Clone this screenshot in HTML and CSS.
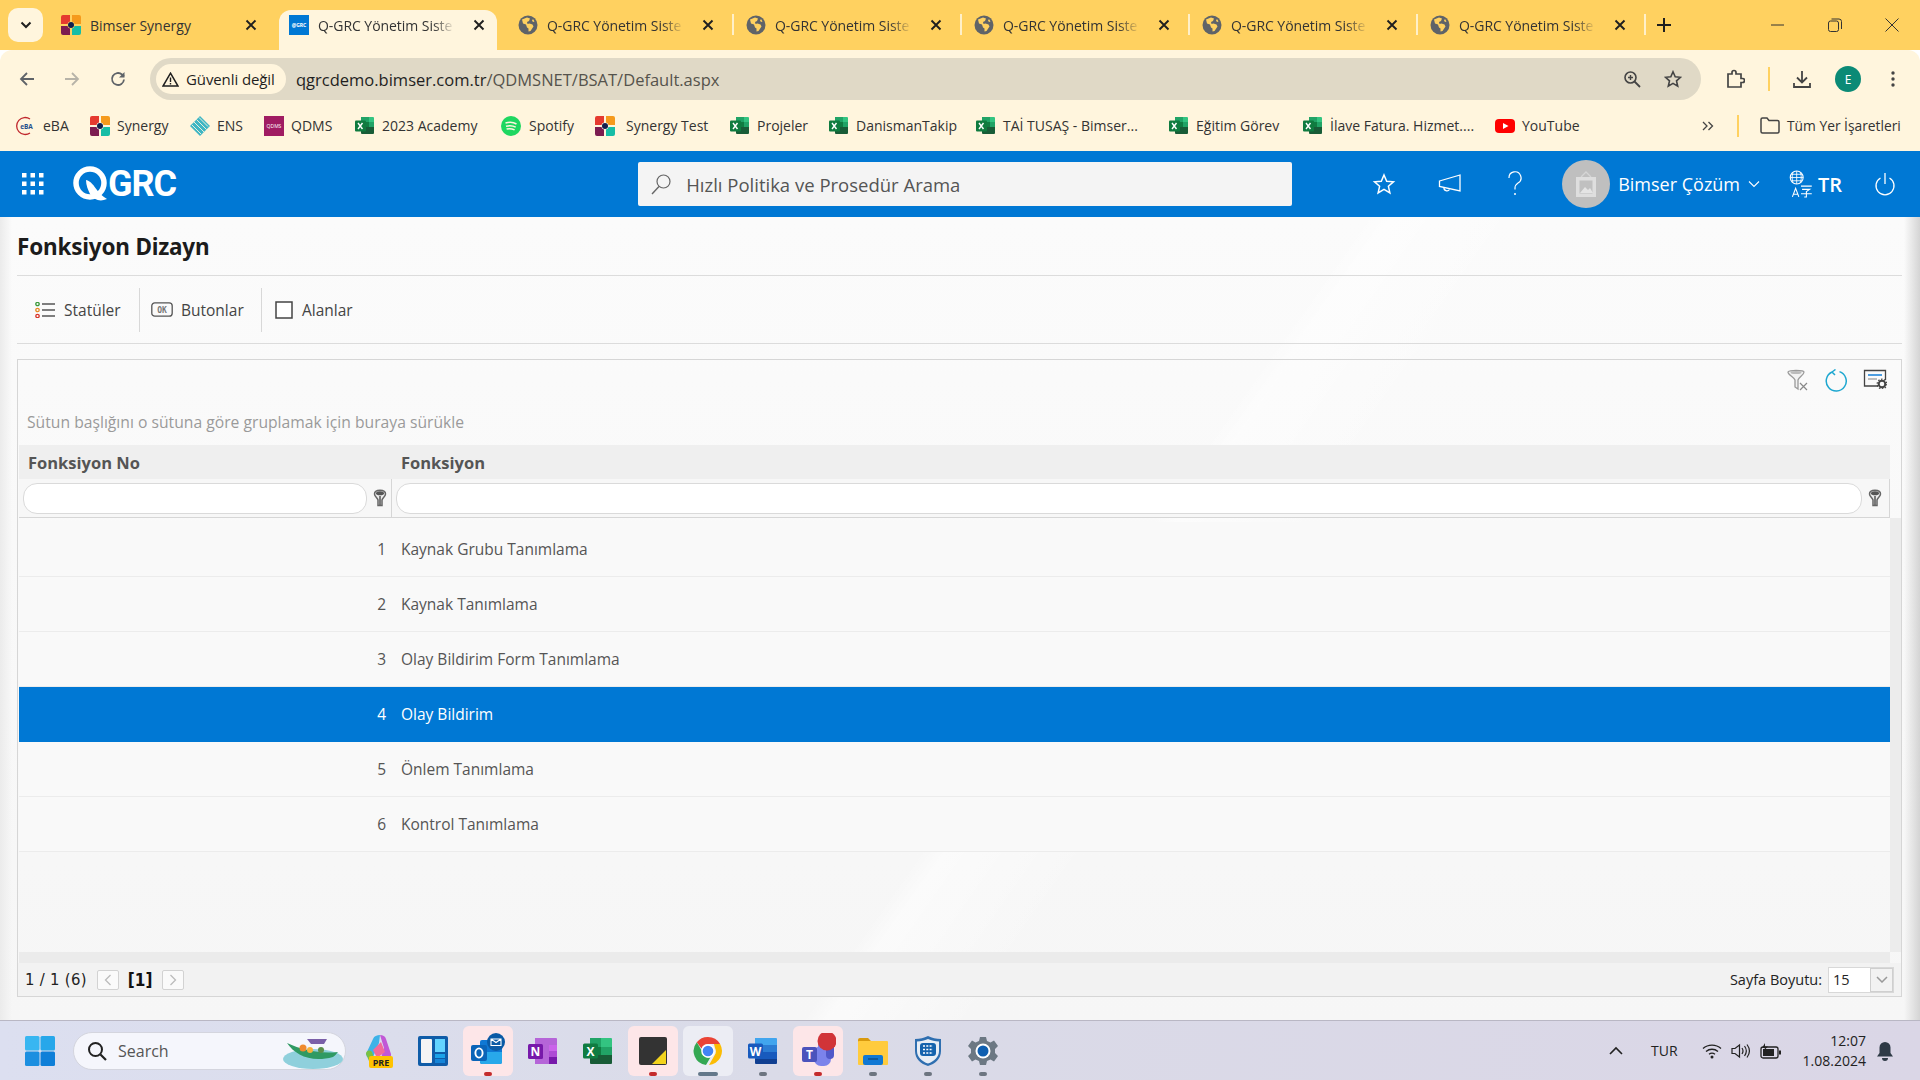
FILE: index.html
```html
<!DOCTYPE html>
<html lang="tr">
<head>
<meta charset="utf-8">
<title>Q-GRC Yönetim Sistemi</title>
<link rel="stylesheet" href="styles.css">
</head>
<body>
<svg class="defs" width="0" height="0" aria-hidden="true">
  <symbol id="bimser" viewBox="0 0 20 20">
    <path fill="#e53a2f" d="M2 0h7v6.500A3 3 0 0 0 6.500 9H0V2a2 2 0 0 1 2-2z"/>
    <path fill="#f59a1c" d="M11 0h7a2 2 0 0 1 2 2v7h-6.500A3 3 0 0 0 11 6.500z"/>
    <path fill="#7c1c50" d="M0 11h6.500A3 3 0 0 0 9 13.500V20H2a2 2 0 0 1-2-2z"/>
    <path fill="#17bda5" d="M13.500 11H20v7a2 2 0 0 1-2 2h-7v-6.500A3 3 0 0 0 13.500 11z"/>
    <circle cx="10" cy="10" r="3" fill="#14204f"/>
  </symbol>
  <symbol id="globe" viewBox="0 0 20 20">
    <circle cx="10" cy="10" r="9.500" fill="#5f6368"/>
    <path fill="#ffd160" d="M9 2.500 4 4.500l1 4 3 1 1 3 1.500 1v3l2-.5 3-4.500-1-2-3-1-2 .5-.5-2 2-1 1-2.500zM15 4l1.500 2.500-1.500.5-1-1.500z"/>
  </symbol>
  <symbol id="tabclose" viewBox="0 0 12 12">
    <path d="M1.500 1.500l9 9M10.500 1.500l-9 9" stroke="#1f1f1f" stroke-width="1.900" fill="none"/>
  </symbol>
  <symbol id="xlsx" viewBox="0 0 20 20">
    <path fill="#21a366" d="M6 1h8v5H6z"/><path fill="#33c481" d="M14 1h4a1 1 0 0 1 1 1v4h-5z"/>
    <path fill="#107c41" d="M6 6h8v5H6z"/><path fill="#21a366" d="M14 6h5v5h-5z"/>
    <path fill="#185c37" d="M6 11h13v6a1 1 0 0 1-1 1H7a1 1 0 0 1-1-1z"/>
    <rect x="0" y="4.500" width="11" height="11" rx="1" fill="#0f7b3f"/>
    <path d="M3 7l4.500 6M7.500 7L3 13" stroke="#fff" stroke-width="1.400" fill="none"/>
  </symbol>
  <symbol id="funnel" viewBox="0 0 14 18">
    <path d="M1.500 5c0-5 11-5 11 0 0 2.500-3 3.500-3.500 6v5.500H5V11C4.500 8.500 1.500 7.500 1.500 5z" fill="#eee" stroke="#666" stroke-width="1.500"/>
    <ellipse cx="7" cy="4.200" rx="4" ry="2" fill="#555"/>
    <path d="M7 7v9" stroke="#555" stroke-width="1.500"/>
  </symbol>
</svg>

<div class="tabstrip">
  <button class="tabs-menu" type="button"><svg width="12" height="8" viewBox="0 0 12 8"><path d="M1.500 1.500 6 6l4.500-4.500" fill="none" stroke="#1f1f1f" stroke-width="2"/></svg></button>
  <div class="tab"><svg class="fav"><use href="#bimser"/></svg><span class="tab-title tab-title-full">Bimser Synergy</span><svg class="tab-x"><use href="#tabclose"/></svg></div>
  <div class="tab tab-active"><span class="fav fav-qgrc">@GRC</span><span class="tab-title">Q-GRC Yönetim Siste</span><svg class="tab-x"><use href="#tabclose"/></svg></div>
  <div class="tab tab-nosep"><svg class="fav"><use href="#globe"/></svg><span class="tab-title">Q-GRC Yönetim Siste</span><svg class="tab-x"><use href="#tabclose"/></svg></div>
  <div class="tab"><svg class="fav"><use href="#globe"/></svg><span class="tab-title">Q-GRC Yönetim Siste</span><svg class="tab-x"><use href="#tabclose"/></svg></div>
  <div class="tab"><svg class="fav"><use href="#globe"/></svg><span class="tab-title">Q-GRC Yönetim Siste</span><svg class="tab-x"><use href="#tabclose"/></svg></div>
  <div class="tab"><svg class="fav"><use href="#globe"/></svg><span class="tab-title">Q-GRC Yönetim Siste</span><svg class="tab-x"><use href="#tabclose"/></svg></div>
  <div class="tab tab-last"><svg class="fav"><use href="#globe"/></svg><span class="tab-title">Q-GRC Yönetim Siste</span><svg class="tab-x"><use href="#tabclose"/></svg></div>
  <svg class="newtab" width="14" height="14" viewBox="0 0 14 14"><path d="M7 0v14M0 7h14" stroke="#1f1f1f" stroke-width="2"/></svg>
  <div class="winctl">
    <svg width="14" height="14" viewBox="0 0 14 14"><path d="M0 7h13" stroke="#333" stroke-width="1"/></svg>
    <svg width="14" height="14" viewBox="0 0 14 14"><rect x=".5" y="3" width="10" height="10.500" rx="2" fill="none" stroke="#333"/><path d="M3.500 1H11a2.500 2.500 0 0 1 2.500 2.500V11" fill="none" stroke="#333"/></svg>
    <svg width="14" height="14" viewBox="0 0 14 14"><path d="M.5.500l13 13M13.500.500l-13 13" stroke="#333" stroke-width="1"/></svg>
  </div>
</div>

<div class="toolbar">
  <svg class="nav nav-back" width="16" height="16" viewBox="0 0 16 16"><path d="M15 8H2M8 2 2 8l6 6" fill="none" stroke="#5f6368" stroke-width="1.800"/></svg>
  <svg class="nav nav-fwd" width="16" height="16" viewBox="0 0 16 16"><path d="M1 8h13M8 2l6 6-6 6" fill="none" stroke="#b7b3a8" stroke-width="1.800"/></svg>
  <svg class="nav nav-reload" width="16" height="16" viewBox="0 0 16 16"><path d="M14 8.500A6 6 0 1 1 12 3.500L14 5.500" fill="none" stroke="#5f6368" stroke-width="1.800"/><path d="M14.500 1v5.500H9z" fill="#5f6368"/></svg>
  <div class="omnibox">
    <div class="chip">
      <svg width="17" height="15" viewBox="0 0 17 15"><path d="M8.500 1.200 16 14H1z" fill="none" stroke="#1f1f1f" stroke-width="1.500"/><path d="M8.500 5.500v4.500M8.500 11v1.500" stroke="#1f1f1f" stroke-width="1.400"/></svg>
      <span>Güvenli değil</span>
    </div>
    <div class="url">qgrcdemo.bimser.com.tr<span class="url-path">/QDMSNET/BSAT/Default.aspx</span></div>
    <svg class="omni-zoom" width="18" height="18" viewBox="0 0 18 18"><circle cx="7.500" cy="7.500" r="5.500" fill="none" stroke="#444" stroke-width="1.600"/><path d="M11.500 11.500 17 17" stroke="#444" stroke-width="1.800"/><path d="M5 7.500h5M7.500 5v5" stroke="#444" stroke-width="1.400"/></svg>
    <svg class="omni-star" width="18" height="18" viewBox="0 0 18 18"><path d="M9 1.800 11.200 6.800l5.300.5-4 3.600 1.200 5.300L9 13.400l-4.700 2.800 1.200-5.300-4-3.600 5.300-.5z" fill="none" stroke="#444" stroke-width="1.600"/></svg>
  </div>
  <svg class="ext" width="20" height="20" viewBox="0 0 20 20"><path d="M3 5h4V3.500a2 2 0 0 1 4 0V5h5v4.500h1.500a2 2 0 0 1 0 4H16V18H3v-4.500h0V10h0z" fill="none" stroke="#444" stroke-width="1.700"/></svg>
  <i class="tb-sep"></i>
  <svg class="dl" width="20" height="20" viewBox="0 0 20 20"><path d="M10 2v11M5 8.500l5 5 5-5" fill="none" stroke="#444" stroke-width="1.800"/><path d="M2 14v4h16v-4" fill="none" stroke="#444" stroke-width="1.800"/></svg>
  <span class="avatar-e">E</span>
  <svg class="kebab" width="4" height="18" viewBox="0 0 4 18"><circle cx="2" cy="3" r="1.700" fill="#444"/><circle cx="2" cy="9" r="1.700" fill="#444"/><circle cx="2" cy="15" r="1.700" fill="#444"/></svg>
</div>

<div class="bookmarks">
  <a class="bm bm-eba"><svg class="bm-ic" viewBox="0 0 20 20"><path d="M15 3A8.500 8.500 0 1 0 15 17" fill="none" stroke="#c0272d" stroke-width="1.300"/><text x="11.500" y="12.500" text-anchor="middle" class="ebatext">eBA</text></svg><span>eBA</span></a>
  <a class="bm bm-syn"><svg class="bm-ic"><use href="#bimser"/></svg><span>Synergy</span></a>
  <a class="bm bm-ens"><svg class="bm-ic" viewBox="0 0 20 20"><path d="M10 0 20 10 10 20 0 10z" fill="#3fb6c4"/><path d="M4 6l10 10M6.500 3.500l10 10M2 9l9 9M9 1.500l9 9" stroke="#fff5dd" stroke-width=".9"/></svg><span>ENS</span></a>
  <a class="bm bm-qdms"><span class="bm-q">QDMS</span><span>QDMS</span></a>
  <a class="bm bm-aca"><svg class="bm-ic"><use href="#xlsx"/></svg><span>2023 Academy</span></a>
  <a class="bm bm-spo"><svg class="bm-ic" viewBox="0 0 20 20"><circle cx="10" cy="10" r="10" fill="#1ed760"/><path d="M4.500 7c3.500-1 8-.8 11 1M5 10.200c3-.8 7-.6 9.700 1M5.600 13c2.500-.6 5.500-.4 8 .9" stroke="#fff5dd" stroke-width="1.500" fill="none"/></svg><span>Spotify</span></a>
  <a class="bm bm-st"><svg class="bm-ic"><use href="#bimser"/></svg><span>Synergy Test</span></a>
  <a class="bm bm-pro"><svg class="bm-ic"><use href="#xlsx"/></svg><span>Projeler</span></a>
  <a class="bm bm-dan"><svg class="bm-ic"><use href="#xlsx"/></svg><span>DanismanTakip</span></a>
  <a class="bm bm-tai"><svg class="bm-ic"><use href="#xlsx"/></svg><span>TAİ TUSAŞ - Bimser...</span></a>
  <a class="bm bm-egi"><svg class="bm-ic"><use href="#xlsx"/></svg><span>Eğitim Görev</span></a>
  <a class="bm bm-ila"><svg class="bm-ic"><use href="#xlsx"/></svg><span>İlave Fatura. Hizmet....</span></a>
  <a class="bm bm-yt"><svg class="bm-ic" viewBox="0 0 20 20"><rect y="3" width="20" height="14" rx="4" fill="#f00"/><path d="M8 7l5.500 3L8 13z" fill="#fff"/></svg><span>YouTube</span></a>
  <div class="bm-end">
    <svg width="12" height="10" viewBox="0 0 12 10"><path d="M1 1l4 4-4 4M6.500 1l4 4-4 4" fill="none" stroke="#444" stroke-width="1.300"/></svg>
    <i class="tb-sep"></i>
    <svg width="20" height="17" viewBox="0 0 20 17"><path d="M1 2.500A1.500 1.500 0 0 1 2.500 1H7l2 2.500h8.500A1.500 1.500 0 0 1 19 5v9.500a1.500 1.500 0 0 1-1.500 1.500h-15A1.500 1.500 0 0 1 1 14.500z" fill="none" stroke="#444" stroke-width="1.500"/></svg>
    <span>Tüm Yer İşaretleri</span>
  </div>
</div>

<header class="appbar">
  <svg class="waffle" width="22" height="22" viewBox="0 0 22 22" fill="#fff"><rect x="0" y="0" width="4.500" height="4.500"/><rect x="8.500" y="0" width="4.500" height="4.500"/><rect x="17" y="0" width="4.500" height="4.500"/><rect x="0" y="8.500" width="4.500" height="4.500"/><rect x="8.500" y="8.500" width="4.500" height="4.500"/><rect x="17" y="8.500" width="4.500" height="4.500"/><rect x="0" y="17" width="4.500" height="4.500"/><rect x="8.500" y="17" width="4.500" height="4.500"/><rect x="17" y="17" width="4.500" height="4.500"/></svg>
  <div class="logo">
    <svg width="36" height="36" viewBox="0 0 36 36"><circle cx="17" cy="17" r="14" fill="none" stroke="#fff" stroke-width="5.500"/><path d="M13 14c5 1 8 6 11 10 2 3 5 6 10 9-7 3-13 1-17-5-2-4-4-9-4-14z" fill="#fff"/></svg>
    <span>GRC</span>
  </div>
  <div class="search">
    <svg width="22" height="22" viewBox="0 0 22 22"><circle cx="13.500" cy="8.500" r="6.500" fill="none" stroke="#666" stroke-width="1.200"/><path d="M9 13.500 2 21" stroke="#666" stroke-width="1.400"/></svg>
    <span>Hızlı Politika ve Prosedür Arama</span>
  </div>
  <svg class="ab-star" width="24" height="24" viewBox="0 0 24 24"><path d="M12 3l2.700 6.200 6.800.6-5.100 4.500 1.500 6.600L12 17.400 6.100 20.900l1.500-6.600-5.100-4.500 6.800-.6z" fill="none" stroke="#fff" stroke-width="1.500"/></svg>
  <svg class="ab-mega" width="24" height="24" viewBox="0 0 24 24"><path d="M1.500 9 22 3v16L1.500 14.500z" fill="none" stroke="#fff" stroke-width="1.300"/><path d="M6 15.500a3 3 0 0 0 5.500 2" fill="none" stroke="#fff" stroke-width="1.300"/></svg>
  <svg class="ab-help" width="18" height="26" viewBox="0 0 18 26"><path d="M3 7a6 6 0 1 1 9 5c-2 1.300-3 2.500-3 5v1.500" fill="none" stroke="#fff" stroke-width="1.200"/><circle cx="9" cy="23" r="1" fill="#fff"/></svg>
  <div class="user-photo"><svg width="26" height="30" viewBox="0 0 26 30"><path d="M8 8l5-5 5 5" fill="none" stroke="#d5d5d5" stroke-width="1.300"/><rect x="3" y="8" width="20" height="20" fill="#dedede"/><rect x="6.500" y="11.500" width="13" height="13" fill="#c0c0c0"/><path d="M7 24l5-6 3 3 2-2 3 5z" fill="#e4e4e4"/></svg></div>
  <span class="user-name">Bimser Çözüm</span>
  <svg class="user-caret" width="12" height="8" viewBox="0 0 12 8"><path d="M1 1.500l5 5 5-5" fill="none" stroke="#fff" stroke-width="1.100"/></svg>
  <svg class="ab-lang" width="24" height="28" viewBox="0 0 22 26"><circle cx="7" cy="7" r="6" fill="none" stroke="#fff"/><path d="M1 7h12M7 1v12M3.500 2.500c-1 3-1 6 0 9M10.500 2.500c1 3 1 6 0 9M2 4h10M2 10h10" fill="none" stroke="#fff" stroke-width=".8"/><path d="M3 25l3-8 3 8M4 22.500h4" fill="none" stroke="#fff"/><path d="M11 15h10M12 18h7l-3 2v5h-2M11 22h10" fill="none" stroke="#fff"/></svg>
  <span class="lang">TR</span>
  <svg class="ab-power" width="22" height="26" viewBox="0 0 22 26"><path d="M11 2v11" stroke="#fff" stroke-width="1.300"/><path d="M6.500 7A9 9 0 1 0 15.500 7" fill="none" stroke="#fff" stroke-width="1.300"/></svg>
</header>

<main class="page">
  <h1 class="page-title">Fonksiyon Dizayn</h1>
  <nav class="subnav">
    <a class="subnav-item sn-1">
      <svg width="20" height="16" viewBox="0 0 20 16"><circle cx="2.500" cy="2" r="1.700" fill="none" stroke="#3c9a3c" stroke-width="1.300"/><circle cx="2.500" cy="8" r="1.700" fill="none" stroke="#e78a26" stroke-width="1.300"/><circle cx="2.500" cy="14" r="1.700" fill="none" stroke="#d9362b" stroke-width="1.300"/><path d="M7 2h13M7 8h13M7 14h13" stroke="#555" stroke-width="1.300"/></svg>
      <span>Statüler</span>
    </a>
    <a class="subnav-item sn-2">
      <svg width="22" height="15" viewBox="0 0 22 15"><rect x=".8" y=".8" width="20.400" height="13.400" rx="3" fill="none" stroke="#555" stroke-width="1.300"/><text x="11" y="10.500" text-anchor="middle" class="oktext">OK</text></svg>
      <span>Butonlar</span>
    </a>
    <a class="subnav-item sn-3">
      <svg width="18" height="18" viewBox="0 0 18 18"><rect x="1" y="1" width="16" height="16" fill="#fff" stroke="#444" stroke-width="1.500"/></svg>
      <span>Alanlar</span>
    </a>
  </nav>
  <section class="grid-panel">
    <div class="grid-tools">
      <svg width="22" height="22" viewBox="0 0 22 22"><path d="M1 3c0-2 16-2 16 0 0 3-5 5-6 8v9l-3-2v-7C7 8 1 6 1 3z" fill="#f2f2f2" stroke="#9a9a9a" stroke-width="1.300"/><ellipse cx="9" cy="3.500" rx="5.500" ry="1.500" fill="#bbb"/><path d="M13 14l7 7M20 14l-7 7" stroke="#888" stroke-width="1.200"/></svg>
      <svg width="24" height="24" viewBox="0 0 24 24"><path d="M15.500 2.600A10 10 0 1 1 8 3" fill="none" stroke="#1ea7d0" stroke-width="1.500"/><path d="M8 3l3.500-2.500M8 3l3 3" fill="none" stroke="#1ea7d0" stroke-width="1.500"/></svg>
      <svg width="24" height="20" viewBox="0 0 24 20"><path d="M15 17H1.500V1.500h21V11" fill="none" stroke="#444" stroke-width="1.300"/><path d="M5 6h14" stroke="#4d9de0" stroke-width="2"/><path d="M5 10h9" stroke="#aaa" stroke-width="1.500"/><circle cx="19" cy="15" r="3.300" fill="none" stroke="#444" stroke-width="2"/><circle cx="19" cy="15" r="4.800" fill="none" stroke="#444" stroke-width="1.200" stroke-dasharray="1.500 1.500"/></svg>
    </div>
    <div class="group-hint">Sütun başlığını o sütuna göre gruplamak için buraya sürükle</div>
    <div class="grid-head">
      <div class="col-a">Fonksiyon No</div>
      <div class="col-b">Fonksiyon</div>
    </div>
    <div class="grid-filter">
      <div class="filter-cell fc-a"><span class="filter-input"></span><svg class="funnel"><use href="#funnel"/></svg></div>
      <div class="filter-cell fc-b"><span class="filter-input"></span><svg class="funnel"><use href="#funnel"/></svg></div>
    </div>
    <div class="grid-scrollwrap">
      <div class="grid-body">
        <div class="grid-row"><div class="num">1</div><div class="name">Kaynak Grubu Tanımlama</div></div>
        <div class="grid-row"><div class="num">2</div><div class="name">Kaynak Tanımlama</div></div>
        <div class="grid-row"><div class="num">3</div><div class="name">Olay Bildirim Form Tanımlama</div></div>
        <div class="grid-row is-selected"><div class="num">4</div><div class="name">Olay Bildirim</div></div>
        <div class="grid-row"><div class="num">5</div><div class="name">Önlem Tanımlama</div></div>
        <div class="grid-row"><div class="num">6</div><div class="name">Kontrol Tanımlama</div></div>
      </div>
      <div class="vscroll"></div>
    </div>
    <div class="hscroll"></div>
    <div class="pager">
      <span class="pg-count">1 / 1 (6)</span>
      <span class="pg-btn"><svg width="8" height="12" viewBox="0 0 8 12"><path d="M6.500 1 1.500 6l5 5" fill="none" stroke="#bbb" stroke-width="1.300"/></svg></span>
      <b class="pg-cur">[1]</b>
      <span class="pg-btn"><svg width="8" height="12" viewBox="0 0 8 12"><path d="M1.500 1l5 5-5 5" fill="none" stroke="#bbb" stroke-width="1.300"/></svg></span>
      <span class="pg-size-label">Sayfa Boyutu:</span>
      <span class="pg-size"><span class="pg-size-val">15</span><span class="pg-size-btn"><svg width="12" height="7" viewBox="0 0 12 7"><path d="M1 1l5 5 5-5" fill="none" stroke="#999" stroke-width="1.500"/></svg></span></span>
    </div>
  </section>
</main>

<footer class="taskbar">
  <svg class="start" width="32" height="32" viewBox="0 0 32 32"><rect x="1" y="1" width="14.500" height="14.500" rx="1.500" fill="#38b6f1"/><rect x="16.500" y="1" width="14.500" height="14.500" rx="1.500" fill="#27a7ea"/><rect x="1" y="16.500" width="14.500" height="14.500" rx="1.500" fill="#1c8fe0"/><rect x="16.500" y="16.500" width="14.500" height="14.500" rx="1.500" fill="#0f7fd8"/></svg>
  <div class="tb-search">
    <svg width="20" height="20" viewBox="0 0 20 20"><circle cx="8.500" cy="8.500" r="6.500" fill="none" stroke="#222" stroke-width="2"/><path d="M13.500 13.500 19 19" stroke="#222" stroke-width="2.200"/></svg>
    <span>Search</span>
    <svg class="boat" width="64" height="34" viewBox="0 0 64 34"><ellipse cx="34" cy="24" rx="30" ry="10" fill="#8fd0dc"/><path d="M8 8c8 12 24 20 46 14 2-1 3-3 5-5-18 2-36-2-51-9z" fill="#2f9a63"/><circle cx="24" cy="13" r="3.500" fill="#ef8a2e"/><circle cx="31" cy="15" r="3" fill="#f4b33c"/><circle cx="42" cy="15" r="3" fill="#5b8f4a"/><path d="M28 4h20l-3 5H32z" fill="#7a5fa8"/></svg>
  </div>
  <div class="tb-apps">
    <div class="tb-app"><svg width="30" height="34" viewBox="0 0 30 34"><path d="M3 20 10 5c1-3 4-4 7-4l-1 8-6 14H4z" fill="#3db2e8"/><path d="M17 1c3 0 5 1 6 4l5 15c.5 2-1 4-3 4h-7l3-10z" fill="#c158d6"/><path d="M10 16l8-8 4 10-8 6z" fill="#f26a9b"/><path d="M3 20c0-3 3-5 6-2l3 9H6z" fill="#7ac143"/><rect x="6" y="22" width="24" height="12" rx="2" fill="#ffc300"/><text x="18" y="31.500" text-anchor="middle" class="pretext">PRE</text></svg></div>
    <div class="tb-app"><svg width="30" height="30" viewBox="0 0 30 30"><rect width="30" height="30" rx="2" fill="#0f5ca8"/><rect x="3" y="3" width="11" height="24" rx="1" fill="#f4f4f4"/><rect x="17" y="3" width="10" height="13" fill="#63d4ff"/><rect x="17" y="18" width="10" height="4" fill="#1ba2e8"/><rect x="17" y="23" width="10" height="4" fill="#1585d8"/></svg></div>
    <div class="tb-app is-open is-hot"><svg width="36" height="36" viewBox="0 0 36 36"><rect x="10" y="7" width="22" height="24" rx="2" fill="#0f78d4"/><path d="M10 19l22 0v10a2 2 0 0 1-2 2H12a2 2 0 0 1-2-2z" fill="#28a8ea"/><rect x="1" y="12" width="16" height="16" rx="2" fill="#0a64b8"/><ellipse cx="9" cy="20" rx="3.600" ry="4.600" fill="none" stroke="#fff" stroke-width="1.900"/><circle cx="26" cy="9" r="9" fill="#0a5aa5"/><path d="M21 6h10v6.500H21zM21 6l5 3.500L31 6" fill="none" stroke="#fff" stroke-width="1.100"/></svg></div>
    <div class="tb-app"><svg width="30" height="30" viewBox="0 0 30 30"><path d="M7 2h21a1 1 0 0 1 1 1v24a1 1 0 0 1-1 1H7z" fill="#b565d8"/><path d="M21 9h8v6h-8z" fill="#ca64ea"/><path d="M21 15h8v6h-8z" fill="#ae4bd5"/><path d="M21 21h8v7h-8z" fill="#7719aa"/><rect x="0" y="8" width="15" height="15" rx="1.500" fill="#7719aa"/><text x="7.500" y="20" text-anchor="middle" class="apptext">N</text></svg></div>
    <div class="tb-app"><svg width="30" height="30" viewBox="0 0 30 30"><path d="M7 2h11v9H7z" fill="#21a366"/><path d="M18 2h10a1 1 0 0 1 1 1v8H18z" fill="#33c481"/><path d="M7 11h11v8H7z" fill="#107c41"/><path d="M18 11h11v8H18z" fill="#21a366"/><path d="M7 19h22v8a1 1 0 0 1-1 1H8a1 1 0 0 1-1-1z" fill="#185c37"/><rect x="0" y="7.500" width="15" height="15" rx="1.500" fill="#107c41"/><text x="7.500" y="19.500" text-anchor="middle" class="apptext">X</text></svg></div>
    <div class="tb-app is-open is-hot"><svg width="28" height="28" viewBox="0 0 28 28"><rect width="28" height="28" rx="2" fill="#333"/><path d="M13 27 27 13v14z" fill="#f3d31c"/></svg></div>
    <div class="tb-app is-open is-active"><svg width="30" height="30" viewBox="0 0 30 30"><path d="M15 1a14 14 0 0 1 12.100 7H15a7 7 0 0 0-6.500 4.400L3.800 6.200A14 14 0 0 1 15 1z" fill="#ea4335"/><path d="M27.100 8A14 14 0 0 1 16 29l5.600-9.700A7 7 0 0 0 22 12l-1-4z" fill="#fbbc04"/><path d="M3.800 6.200 9 15a7 7 0 0 0 8.400 6.600L13 29A14 14 0 0 1 3.800 6.200z" fill="#34a853"/><circle cx="15" cy="15" r="6.800" fill="#fff"/><circle cx="15" cy="15" r="5.300" fill="#4285f4"/></svg></div>
    <div class="tb-app is-open"><svg width="30" height="30" viewBox="0 0 30 30"><path d="M7 2h21a1 1 0 0 1 1 1v6H7z" fill="#41a5ee"/><rect x="7" y="9" width="22" height="7" fill="#2b7cd3"/><rect x="7" y="16" width="22" height="7" fill="#185abd"/><path d="M7 23h22v4a1 1 0 0 1-1 1H8a1 1 0 0 1-1-1z" fill="#103f91"/><rect x="0" y="7.500" width="15" height="15" rx="1.500" fill="#185abd"/><text x="7.500" y="19.500" text-anchor="middle" class="apptext">W</text></svg></div>
    <div class="tb-app is-open is-hot"><svg width="36" height="36" viewBox="0 0 36 36"><circle cx="22" cy="13" r="4" fill="#7b83eb"/><rect x="14" y="13" width="17" height="20" rx="7" fill="#7b83eb"/><rect x="26" y="10" width="8" height="16" rx="4" fill="#5059c9"/><rect x="2" y="14" width="15" height="15" rx="2" fill="#4b53bc"/><text x="9.500" y="26" text-anchor="middle" class="apptext">T</text><circle cx="27" cy="8" r="9.500" fill="#d13438"/></svg></div>
    <div class="tb-app is-open"><svg width="32" height="28" viewBox="0 0 32 28"><path d="M1 3a2 2 0 0 1 2-2h8l3 3h16v6H1z" fill="#d99a0e"/><rect x="1" y="4" width="30" height="24" rx="1" fill="#ffcb3d"/><rect x="6" y="18" width="20" height="10" rx="2" fill="#0f78d4"/><path d="M11 22h10" stroke="#0a4f8f" stroke-width="1.500"/></svg></div>
    <div class="tb-app is-open"><svg width="28" height="32" viewBox="0 0 28 32"><path d="M14 1c4 2 8 3 13 3v12c0 8-6 13-13 15C7 29 1 24 1 16V4c5 0 9-1 13-3z" fill="#2f6fb0"/><path d="M14 4c3.500 1.500 7 2.500 11 2.500V16c0 6-5 10.500-11 12.500C8 26.500 3 22 3 16V6.500C7 6.500 10.500 5.500 14 4z" fill="#e8eef5"/><rect x="6" y="8" width="16" height="13" rx="3" fill="#1463ad"/><path d="M9 11h10M9 14.500h10M9 18h10" stroke="#fff" stroke-width="1.500" stroke-dasharray="2 1.300"/></svg></div>
    <div class="tb-app is-open"><svg width="30" height="30" viewBox="0 0 30 30"><path d="M12 1h6l1 4 3.500 1.500L26 4.500l4 5.500-3 3v4l3 3-4 5.500-3.500-2L19 25l-1 4h-6l-1-4-3.500-1.500L4 25.500 0 20l3-3v-4L0 10l4-5.500 3.500 2L11 5z" fill="#6c7883"/><circle cx="15" cy="15" r="7.500" fill="#fff"/><circle cx="15" cy="15" r="5.500" fill="#0f5fb0"/></svg></div>
  </div>
  <div class="tray">
    <svg class="tr-up" width="14" height="9" viewBox="0 0 14 9"><path d="M1 8l6-6 6 6" fill="none" stroke="#222" stroke-width="1.600"/></svg>
    <span class="tr-lang">TUR</span>
    <svg class="tr-wifi" width="20" height="16" viewBox="0 0 20 16"><path d="M1 5.500c5-4.500 13-4.500 18 0M4 8.500c3.500-3 8.500-3 12 0M7 11.300c2-1.500 4-1.500 6 0" fill="none" stroke="#222" stroke-width="1.300"/><circle cx="10" cy="14" r="1.500" fill="#222"/></svg>
    <svg class="tr-vol" width="20" height="16" viewBox="0 0 20 16"><path d="M1 5.500h3L8.500 2v12L4 10.500H1z" fill="none" stroke="#222" stroke-width="1.200"/><path d="M11 5c1.200 1.800 1.200 4.200 0 6M13.500 3c2.200 3 2.200 7 0 10M16 1.500c3 4 3 9 0 13" fill="none" stroke="#222" stroke-width="1.200"/></svg>
    <svg class="tr-bat" width="22" height="16" viewBox="0 0 22 16"><rect x="1" y="4" width="17" height="11" rx="2" fill="none" stroke="#222" stroke-width="1.300"/><rect x="3" y="6" width="11" height="7" fill="#222"/><rect x="19" y="7.500" width="2" height="4" fill="#222"/><path d="M5 0 2 5h3L3.500 8 8 3.500H5z" fill="#222"/></svg>
    <div class="clock"><span>12:07</span><span>1.08.2024</span></div>
    <svg class="tr-bell" width="18" height="20" viewBox="0 0 18 20"><path d="M9 1a5.500 5.500 0 0 1 5.500 5.500V12l2.500 3.500H1L3.500 12V6.500A5.500 5.500 0 0 1 9 1z" fill="#2e3a46"/><path d="M6 17h6a3 3 0 0 1-6 0z" fill="#2e3a46"/></svg>
  </div>
</footer>
</body>
</html>
```
FILE: styles.css
```css
* { box-sizing: border-box; }
html, body { margin: 0; height: 100%; overflow: hidden; }
body {
  display: flex;
  flex-direction: column;
  height: 1080px;
  font-family: "Noto Sans", "Open Sans", sans-serif;
  color: #1f1f1f;
}
.defs { position: absolute; }
svg { display: block; flex: none; }

/* tab strip */
.tabstrip {
  height: 50px;
  flex: none;
  display: flex;
  align-items: flex-start;
  padding-left: 8px;
  background: #ffd160;
}
.tabs-menu {
  width: 35px;
  height: 34px;
  margin: 8px 4px 0 0;
  border: 0;
  border-radius: 10px;
  background: #fff5dd;
  display: flex;
  align-items: center;
  justify-content: center;
  padding: 0;
}
.tab {
  width: 228px;
  height: 50px;
  flex: none;
  display: flex;
  align-items: center;
  position: relative;
  padding-left: 14px;
}
.tab::before {
  content: "";
  position: absolute;
  left: 0;
  top: 14px;
  width: 2px;
  height: 21px;
  background: #fff0c9;
}
.tab:first-of-type::before, .tab-active::before, .tab-nosep::before { display: none; }
.tab-last::after {
  content: "";
  position: absolute;
  right: -2px;
  top: 14px;
  width: 2px;
  height: 21px;
  background: #fff0c9;
}
.tab-active {
  height: 40px;
  margin: 10px 7px 0 4px;
  width: 218px;
  padding: 0 0 10px 10px;
  background: #fff5dd;
  border-radius: 12px 12px 0 0;
}
.fav { width: 20px; height: 20px; flex: none; }
.fav-qgrc {
  background: #0078d4;
  color: #fff;
  font-size: 5px;
  font-weight: 700;
  display: flex;
  align-items: center;
  justify-content: center;
  overflow: hidden;
}
.tab-title {
  width: 137px;
  flex: none;
  margin-left: 9px;
  font-family: "Open Sans", "Noto Sans", sans-serif;
  font-size: 14px;
  letter-spacing: -.05px;
  white-space: nowrap;
  color: #333;
  -webkit-mask-image: linear-gradient(90deg, #000 84%, transparent 100%);
  mask-image: linear-gradient(90deg, #000 84%, transparent 100%);
}
.tab-title-full { letter-spacing: 0; -webkit-mask-image: none; mask-image: none; }
.tab-x { width: 12px; height: 12px; flex: none; margin-left: 18px; }
.newtab { margin: 18px 0 0 13px; }
.winctl {
  margin-left: auto;
  display: flex;
  gap: 43px;
  padding: 18px 21px 0 0;
}

/* toolbar */
.toolbar {
  height: 50px;
  flex: none;
  display: flex;
  align-items: flex-start;
  background: #fff5dd;
  border-radius: 12px 12px 0 0;
  padding-top: 8px;
}
.nav { margin-top: 13px; }
.nav-back { margin-left: 19px; }
.nav-fwd { margin-left: 29px; }
.nav-reload { margin-left: 30px; }
.omnibox {
  width: 1551px;
  height: 42px;
  margin-left: 24px;
  border-radius: 21px;
  background: #e0d9c6;
  display: flex;
  align-items: center;
  padding-left: 6px;
}
.chip {
  height: 30px;
  width: 130px;
  flex: none;
  border-radius: 15px;
  background: #fff5dd;
  display: flex;
  align-items: center;
  gap: 7px;
  padding-left: 6px;
  font-size: 15px;
  white-space: nowrap;
  font-weight: 500;
  font-family: "Open Sans", sans-serif;
  letter-spacing: -.1px;
}
.url {
  margin-left: 10px;
  font-family: "Open Sans", sans-serif;
  font-size: 16.500px;
  color: #1f1f1f;
  flex: 1;
  white-space: nowrap;
}
.url-path { color: #55534c; }
.omni-zoom { margin-right: 23px; }
.omni-star { margin-right: 19px; }
.ext { margin: 11px 0 0 24px; }
.tb-sep { display: block; width: 2px; height: 24px; background: #ffd160; flex: none; }
.toolbar .tb-sep { margin: 9px 0 0 23px; }
.dl { margin: 11px 0 0 22px; }
.avatar-e {
  width: 26px;
  height: 26px;
  margin: 8px 0 0 23px;
  border-radius: 50%;
  background: #0b8a76;
  color: #fff;
  font-size: 12px;
  display: flex;
  align-items: center;
  justify-content: center;
  flex: none;
}
.kebab { margin: 12px 0 0 30px; }

/* bookmarks */
.bookmarks {
  height: 51px;
  flex: none;
  display: flex;
  align-items: center;
  background: #fff5dd;
  font-family: "Open Sans", sans-serif;
  font-size: 14px;
  color: #333;
}
.bm { display: flex; align-items: center; gap: 7px; white-space: nowrap; flex: none; }
.bm-ic { width: 20px; height: 20px; flex: none; }
.ebatext { font: 700 6.500px "Open Sans", sans-serif; fill: #1f4e8c; }
.bm-eba { margin-left: 15px; width: 75px; gap: 8px; }
.bm-syn { width: 100px; }
.bm-ens { width: 74px; }
.bm-qdms { width: 91px; }
.bm-aca { width: 146px; }
.bm-spo { width: 94px; gap: 8px; }
.bm-st { width: 135px; gap: 11px; }
.bm-pro { width: 99px; }
.bm-dan { width: 147px; }
.bm-tai { width: 193px; }
.bm-egi { width: 134px; }
.bm-ila { width: 192px; }
.bm-yt { width: 95px; }
.bm-q {
  width: 20px;
  height: 20px;
  flex: none;
  background: #a01c62;
  color: #fff;
  font-size: 5px;
  display: flex;
  align-items: center;
  justify-content: center;
  overflow: hidden;
}
.bm-end { display: flex; align-items: center; margin-left: 112px; }
.bm-end .tb-sep { margin: 0 21px 0 23px; height: 22px; }
.bm-end span { margin-left: 7px; white-space: nowrap; font-size: 13.800px; }

/* app bar */
.appbar {
  height: 66px;
  flex: none;
  display: flex;
  align-items: center;
  background: #0078d4;
  color: #fff;
}
.waffle { margin-left: 22px; }
.logo { display: flex; align-items: center; margin-left: 29px; }
.logo span {
  font-family: "Roboto", "Noto Sans", sans-serif;
  font-weight: 700;
  font-size: 36px;
  letter-spacing: -1px;
  margin-left: -1px;
}
.search {
  width: 654px;
  height: 44px;
  margin-left: 462px;
  background: #f4f4f4;
  border-radius: 2px;
  display: flex;
  align-items: center;
  padding-left: 12px;
  gap: 14px;
  color: #555;
  font-size: 18.500px;
  font-weight: 500;
  font-family: "Open Sans", sans-serif;
}
.ab-star { margin-left: 80px; }
.ab-mega { margin-left: 42px; }
.ab-help { margin-left: 44px; }
.user-photo {
  width: 48px;
  height: 48px;
  margin-left: 38px;
  border-radius: 50%;
  background: #bfbfbf;
  display: flex;
  align-items: center;
  justify-content: center;
  flex: none;
}
.user-name { margin-left: 8px; font-size: 18px; font-family: "Open Sans", sans-serif; white-space: nowrap; }
.user-caret { margin-left: 8px; }
.ab-lang { margin-left: 29px; }
.lang { margin-left: 5px; font-size: 20px; font-weight: 600; font-family: "Open Sans", sans-serif; }
.ab-power { margin-left: 32px; }

/* page */
.page {
  flex: 1;
  min-height: 0;
  padding: 0 18px 0 17px;
  display: flex;
  flex-direction: column;
  background:
    linear-gradient(90deg, #ebebeb 0, rgba(235,235,235,0) 12px),
    linear-gradient(270deg, #d4d4d4 0, rgba(216,216,216,0) 16px),
    linear-gradient(125deg, rgba(255,255,255,0) 55%, rgba(255,255,255,.5) 56%, rgba(255,255,255,0) 62%),
    linear-gradient(180deg, #fbfbfb 0, #f6f6f6 100%);
  color: #444;
}
.page-title {
  margin: 0;
  height: 59px;
  flex: none;
  display: flex;
  align-items: center;
  border-bottom: 1px solid #dcdcdc;
  font-size: 22.500px;
  font-weight: 700;
  color: #1c1c1c;
  font-family: "Noto Sans", sans-serif;
  letter-spacing: -.2px;
}
.subnav {
  height: 68px;
  flex: none;
  display: flex;
  align-items: center;
  border-bottom: 1px solid #dcdcdc;
  font-size: 15.500px;
  font-family: "Open Sans", sans-serif;
  color: #444;
}
.subnav-item { height: 44px; display: flex; align-items: center; flex: none; }
.sn-1 { width: 123px; padding-left: 18px; gap: 9px; border-right: 1px solid #d8d8d8; }
.sn-2 { width: 122px; padding-left: 11px; gap: 8px; border-right: 1px solid #d8d8d8; }
.sn-3 { padding-left: 13px; gap: 9px; }
.oktext { font: 700 8px "DejaVu Sans Mono", monospace; fill: #777; }

.grid-panel {
  margin-top: 15px;
  height: 638px;
  flex: none;
  border: 1px solid #d6d6d6;
  display: flex;
  flex-direction: column;
  font-family: "Open Sans", sans-serif;
}
.grid-tools {
  height: 46px;
  flex: none;
  display: flex;
  justify-content: flex-end;
  align-items: flex-start;
  gap: 15px;
  padding: 8px 14px 0 0;
}
.grid-tools svg { margin-top: 1px; }
.group-hint {
  height: 39px;
  flex: none;
  padding-bottom: 8px;
  padding-left: 9px;
  font-size: 15.700px;
  color: #9a9a9a;
  display: flex;
  align-items: center;
}
.grid-head {
  height: 34px;
  flex: none;
  width: 1871px;
  margin-left: 1px;
  display: grid;
  grid-template-columns: 373px 1fr;
  align-items: center;
  background: #efefef;
  font-size: 16.500px;
  font-weight: 700;
  color: #555;
}
.col-a { padding-left: 9px; }
.col-b { padding-left: 9px; }
.grid-filter {
  height: 39px;
  flex: none;
  width: 1871px;
  margin-left: 1px;
  display: grid;
  grid-template-columns: 373px 1fr;
  border-bottom: 1px solid #d6d6d6;
  border-right: 1px solid #d6d6d6;
  background: #f7f7f7;
}
.filter-cell { display: flex; align-items: center; padding: 0 4px; height: 38px; }
.fc-a { border-right: 1px solid #d6d6d6; }
.fc-b { padding-right: 7px; }
.filter-input {
  flex: 1;
  height: 31px;
  background: #fff;
  border: 1px solid #dadada;
  border-radius: 14px;
}
.funnel { width: 14px; height: 18px; margin-left: 6px; }
.grid-scrollwrap { flex: 1; min-height: 0; display: flex; }
.grid-body { width: 1871px; margin-left: 1px; padding-top: 4px; flex: none; }
.grid-row {
  height: 55px;
  display: grid;
  grid-template-columns: 373px 1fr;
  align-items: center;
  border-bottom: 1px solid #ececec;
  font-size: 15.500px;
  color: #555;
  background: #f9f9f9;
}
.num { text-align: right; padding-right: 6px; }
.name { padding-left: 9px; }
.is-selected { background: #0078d4; color: #fff; border-bottom-color: #0078d4; }
.vscroll { width: 11px; flex: none; background: #ececec; }
.hscroll { height: 11px; flex: none; width: 1871px; margin-left: 1px; background: #ebebeb; }
.pager {
  height: 33px;
  flex: none;
  display: flex;
  align-items: center;
  padding: 0 7px;
  background: #f2f2f2;
  font-family: "DejaVu Sans Condensed", "Noto Sans", sans-serif;
  font-size: 16.500px;
  color: #222;
}
.pg-count { margin-right: 10px; letter-spacing: .3px; }
.pg-btn {
  width: 22px;
  height: 20px;
  border: 1px solid #d2d2d2;
  border-radius: 2px;
  background: #fafafa;
  display: flex;
  align-items: center;
  justify-content: center;
}
.pg-cur { margin: 0 10px 0 9px; color: #111; font-size: 17px; }
.pg-size-label { margin-left: auto; font-size: 14.500px; font-family: "Open Sans", sans-serif; color: #222; }
.pg-size {
  width: 66px;
  height: 26px;
  margin-left: 6px;
  background: #fff;
  border: 1px solid #d8d8d8;
  display: flex;
  align-items: center;
  justify-content: space-between;
  font-family: "Open Sans", sans-serif;
  font-size: 14.500px;
}
.pg-size-val { padding-left: 4px; }
.pg-size-btn {
  width: 23px;
  height: 24px;
  background: #f2f2f2;
  border: 1px solid #cfcfcf;
  display: flex;
  align-items: center;
  justify-content: center;
}

/* taskbar */
.taskbar {
  height: 60px;
  flex: none;
  display: flex;
  align-items: center;
  border-top: 1px solid #b9b7c4;
  background: linear-gradient(90deg, #dcdff0 0, #dadbe8 40%, #dad6e6 100%);
}
.start { margin-left: 24px; }
.tb-search {
  width: 273px;
  height: 38px;
  margin-left: 17px;
  border-radius: 19px;
  background: #f5f6fc;
  border: 1px solid #d4d5de;
  display: flex;
  align-items: center;
  padding-left: 13px;
  font-family: "Open Sans", sans-serif;
  font-size: 16px;
  color: #555;
}
.tb-search span { margin-left: 11px; }
.boat { margin-left: auto; margin-right: 2px; margin-top: 2px; }
.tb-apps { display: flex; margin-left: 4px; }
.tb-app {
  width: 55px;
  height: 50px;
  display: flex;
  align-items: center;
  justify-content: center;
  position: relative;
  border-radius: 6px;
}
.is-open::after {
  content: "";
  position: absolute;
  bottom: 0;
  left: 50%;
  margin-left: -4px;
  width: 8px;
  height: 4px;
  border-radius: 2px;
  background: #6d7580;
}
.is-hot { background: #fde6e8; width: 50px; margin: 0 2.500px; }
.is-hot::after { background: #c42b2b; }
.is-active { background: #ecedf4; width: 50px; margin: 0 2.500px; }
.is-active::after { width: 20px; margin-left: -10px; background: #64788a; }
.apptext { font: 700 12px "Open Sans", sans-serif; fill: #fff; }
.pretext { font: 700 9px "Open Sans", sans-serif; fill: #222; }
.tray { margin-left: auto; display: flex; align-items: center; color: #222; font-family: "Open Sans", sans-serif; font-size: 14px; }
.tr-up { margin-right: 28px; }
.tr-lang { margin-right: 24px; }
.tr-vol { margin: 0 9px; }
.clock {
  display: flex;
  flex-direction: column;
  align-items: flex-end;
  margin-left: 21px;
  line-height: 20px;
  font-size: 14px;
}
.tr-bell { margin: 0 26px 0 10px; }
```
